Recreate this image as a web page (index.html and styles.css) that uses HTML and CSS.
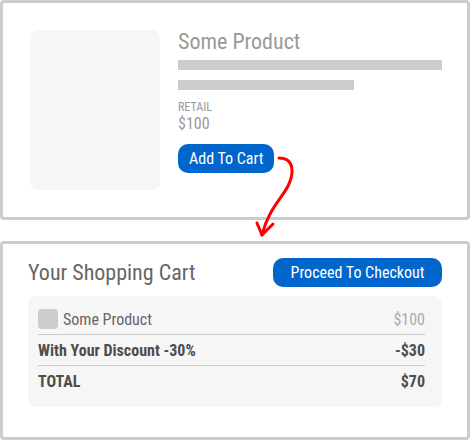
FILE: index.html
```html
<!DOCTYPE html>
<html lang="en">
<head>
    <meta charset="UTF-8">
    <meta name="viewport" content="width=device-width, initial-scale=1.0">
    <title>Add To Cart</title>
    <link rel="stylesheet" href="styles.css">
</head>
<body>
    <div class="card product">
        <div class="thumb"></div>
        <div class="info">
            <h1>Some Product</h1>
            <div class="line"></div>
            <div class="line short"></div>
            <div class="label">RETAIL</div>
            <div class="price">$100</div>
            <button class="btn">Add To Cart</button>
        </div>
    </div>

    <svg class="arrow" width="60" height="90" viewBox="0 0 60 90">
        <path d="M19 8 C 35 8, 34 24, 28 36 C 22 48, 8 60, 2 85" fill="none" stroke="#f00" stroke-width="3" stroke-linecap="round"/>
        <path d="M-3 73 L 2 85 L 13 74" fill="none" stroke="#f00" stroke-width="3" stroke-linecap="round" stroke-linejoin="round"/>
    </svg>

    <div class="card cart">
        <div class="cart-head">
            <h2>Your Shopping Cart</h2>
            <button class="btn wide">Proceed To Checkout</button>
        </div>
        <div class="summary">
            <div class="row">
                <span class="item"><span class="check"></span>Some Product</span>
                <span class="muted">$100</span>
            </div>
            <div class="row bold">
                <span>With Your Discount -30%</span>
                <span>-$30</span>
            </div>
            <div class="row bold">
                <span>TOTAL</span>
                <span>$70</span>
            </div>
        </div>
    </div>
</body>
</html>
```

FILE: styles.css
```css
* {
    margin: 0;
    padding: 0;
    box-sizing: border-box;
}

body {
    font-family: 'Roboto Condensed', Roboto, 'Liberation Sans', sans-serif;
    font-stretch: 87.5%;
    background: white;
    width: 470px;
    height: 440px;
    position: relative;
    overflow: hidden;
}

.card {
    border: 3px solid #ccc;
    border-radius: 4px;
    background: white;
}

.product {
    height: 220px;
    display: flex;
    padding: 26px 25px 0 27px;
    gap: 18px;
}

.thumb {
    width: 130px;
    height: 160px;
    margin-top: 1px;
    background: #f6f6f6;
    border-radius: 8px;
    flex-shrink: 0;
}

.info {
    flex: 1;
    display: flex;
    flex-direction: column;
    align-items: flex-start;
}

h1 {
    font-weight: 400;
    font-size: 22px;
    line-height: 26px;
    color: #999;
    margin-bottom: 5px;
}

.line {
    width: 100%;
    height: 10px;
    background: #ccc;
    margin-bottom: 10px;
}

.line.short {
    width: 176px;
    margin-bottom: 10px;
}

.label {
    font-size: 12px;
    line-height: 14px;
    color: #999;
}

.price {
    font-size: 16px;
    line-height: 20px;
    color: #999;
    margin-bottom: 10px;
}

.btn {
    font-family: inherit;
    font-stretch: inherit;
    background: #0066cc;
    color: white;
    border: none;
    border-radius: 10px;
    font-size: 16px;
    height: 29px;
    padding: 0 11px;
}

.btn.wide {
    width: 169px;
}

.arrow {
    position: absolute;
    left: 260px;
    top: 150px;
    overflow: visible;
}

.cart {
    margin-top: 21px;
    height: 199px;
    padding: 14px 25px 0 25px;
}

.cart-head {
    display: flex;
    justify-content: space-between;
    align-items: center;
    margin-bottom: 9px;
}

h2 {
    font-weight: 400;
    font-size: 22px;
    color: #666;
}

.summary {
    background: #f6f6f6;
    border-radius: 8px;
    padding: 8px 17px 10px 10px;
}

.row {
    display: flex;
    justify-content: space-between;
    align-items: center;
    height: 31px;
    font-size: 16px;
    color: #666;
    border-bottom: 1px solid #ccc;
}

.row:last-child {
    border-bottom: none;
}

.row.bold {
    font-weight: 700;
    color: #4d4d4d;
}

.item {
    display: flex;
    align-items: center;
    gap: 5px;
}

.check {
    width: 20px;
    height: 20px;
    background: #ccc;
    border-radius: 4px;
}

.muted {
    color: #aaa;
}
```
